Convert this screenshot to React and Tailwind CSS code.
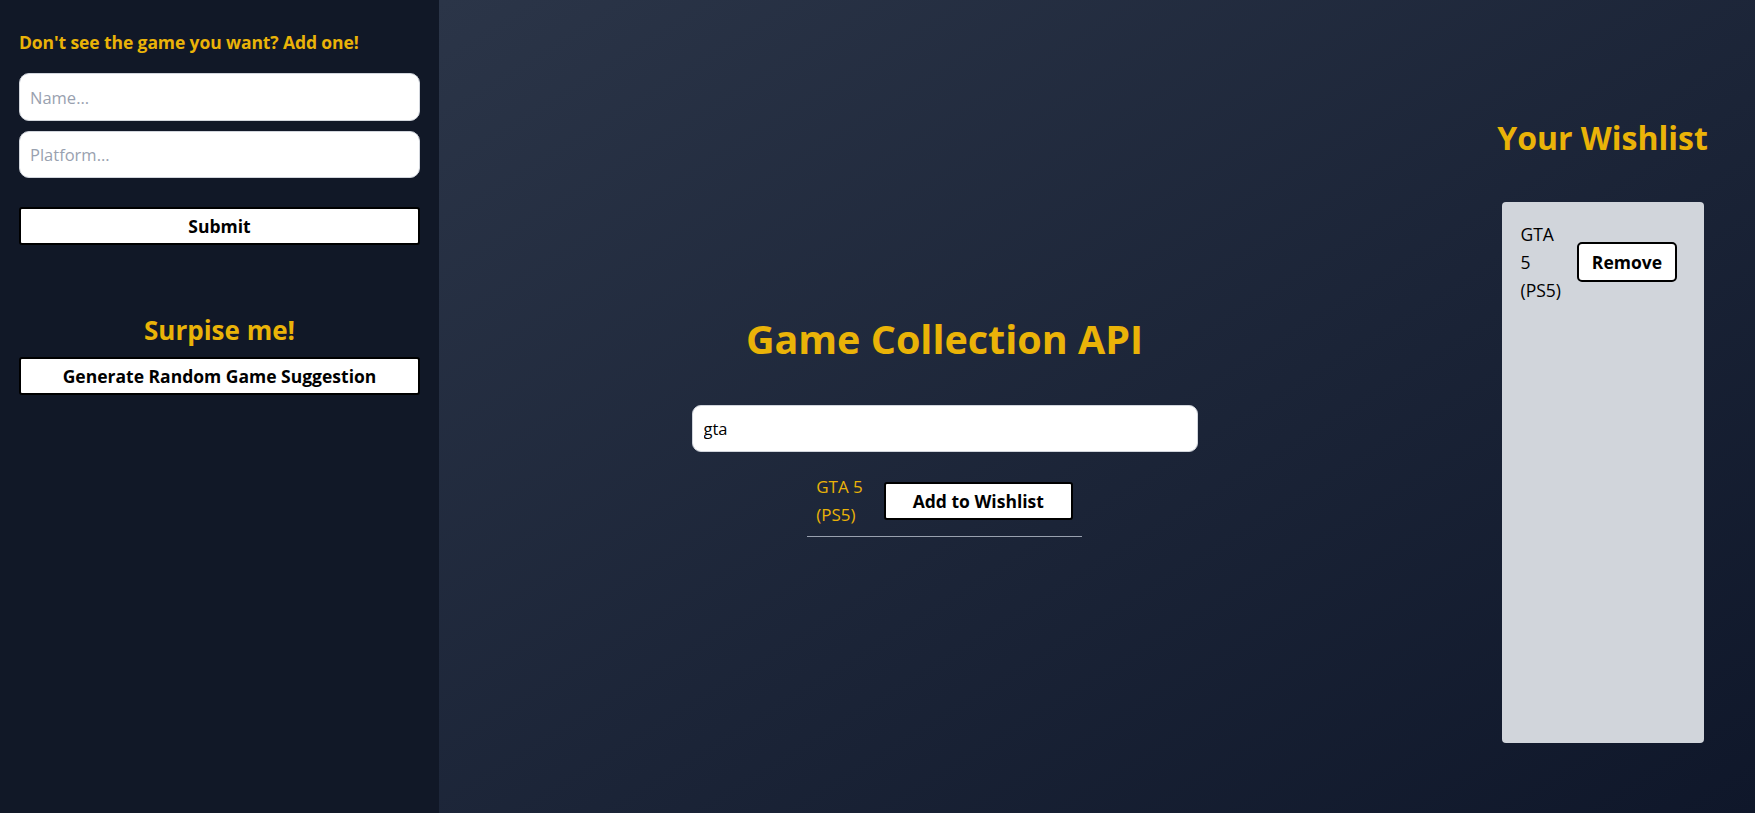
import React, { useState } from 'react';

const font = "font-['Open_Sans','Noto_Sans',sans-serif]";

const App = () => {
  const [name, setName] = useState('');
  const [platform, setPlatform] = useState('');
  const [query, setQuery] = useState('gta');

  return (
    <div className={`flex h-[813px] w-full ${font}`}>
      {/* Sidebar */}
      <aside className="w-[439px] shrink-0 bg-[#111827] px-[19px] pt-[30px]">
        <h3 className="text-[17.5px] font-bold leading-[24px] tracking-[-0.1px] text-[#eab308]">
          Don't see the game you want? Add one!
        </h3>
        <div className="mt-[19px] flex flex-col gap-[10px]">
          <input
            value={name}
            onChange={(e) => setName(e.target.value)}
            placeholder="Name..."
            className="h-[48px] w-full rounded-[10px] border border-gray-300 bg-white px-[10px] text-[16.5px] text-black placeholder-gray-400 focus:outline-none"
          />
          <input
            value={platform}
            onChange={(e) => setPlatform(e.target.value)}
            placeholder="Platform..."
            className="h-[47px] w-full rounded-[10px] border border-gray-300 bg-white px-[10px] text-[16.5px] text-black placeholder-gray-400 focus:outline-none"
          />
        </div>
        <button className="mt-[29px] h-[38px] w-full rounded-[3px] border-2 border-black bg-white text-[17.5px] font-bold text-black">
          Submit
        </button>

        <h3 className="mt-[68px] text-center text-[26px] font-bold leading-[34px] text-[#eab308]">
          Surpise me!
        </h3>
        <button className="mt-[10px] h-[38px] w-full rounded-[3px] border-2 border-black bg-white text-[17.5px] font-bold text-black">
          Generate Random Game Suggestion
        </button>
      </aside>

      {/* Main */}
      <main className="flex flex-1 bg-gradient-to-br from-[#2b3548] to-[#0f172a]">
        <section className="flex flex-1 flex-col items-center pt-[315px]">
          <h1 className="text-[39.5px] font-bold leading-[48px] text-[#eab308]">Game Collection API</h1>
          <input
            value={query}
            onChange={(e) => setQuery(e.target.value)}
            className="mt-[42px] h-[47px] w-[506px] rounded-[9px] border border-gray-300 bg-white px-[11px] text-[16.5px] text-black focus:outline-none"
          />
          <div className="mt-[21px] flex items-center gap-[21px] border-b border-gray-400 px-[9px] pb-[7px]">
            <span className="text-[17px] leading-[28px] text-[#eab308]">
              <span className="block">GTA 5</span>
              <span className="block">(PS5)</span>
            </span>
            <button className="h-[38px] w-[189px] rounded-[3px] border-2 border-black bg-white text-[17.5px] font-bold text-black">
              Add to Wishlist
            </button>
          </div>
        </section>

        <section className="w-[305px] shrink-0 pt-[119px]">
          <h2 className="text-center text-[32px] font-bold leading-[38px] text-[#eab308]">Your Wishlist</h2>
          <div className="mx-auto mt-[45px] h-[541px] w-[202px] rounded-[4px] bg-[#d1d5db] px-[19px] pt-[18px]">
            <div className="flex items-center gap-[16px]">
              <span className="text-[17.5px] leading-[28px] text-black">
                <span className="block">GTA</span>
                <span className="block">5</span>
                <span className="block">(PS5)</span>
              </span>
              <button className="h-[40px] w-[100px] rounded-[5px] border-2 border-black bg-white text-[17.5px] font-bold text-black">
                Remove
              </button>
            </div>
          </div>
        </section>
      </main>
    </div>
  );
};

export default App;
